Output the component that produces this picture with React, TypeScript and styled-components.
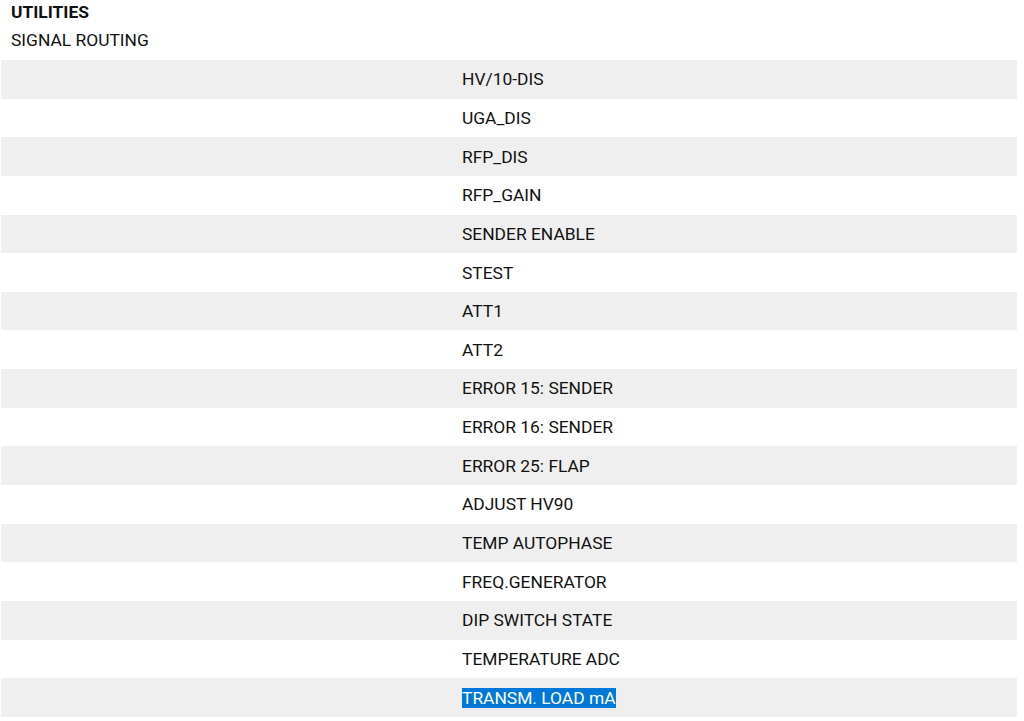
import { FC } from 'react';
import styled, { createGlobalStyle } from 'styled-components';

const signals = [
  'HV/10-DIS',
  'UGA_DIS',
  'RFP_DIS',
  'RFP_GAIN',
  'SENDER ENABLE',
  'STEST',
  'ATT1',
  'ATT2',
  'ERROR 15: SENDER',
  'ERROR 16: SENDER',
  'ERROR 25: FLAP',
  'ADJUST HV90',
  'TEMP AUTOPHASE',
  'FREQ.GENERATOR',
  'DIP SWITCH STATE',
  'TEMPERATURE ADC',
  'TRANSM. LOAD mA',
];

const selectedSignal = 'TRANSM. LOAD mA';

const App: FC = () => {
  return (
    <>
      <GlobalStyle />
      <Page>
        <Header>
          <Title>UTILITIES</Title>
          <SubTitle>SIGNAL ROUTING</SubTitle>
        </Header>
        <SignalList>
          {signals.map((signal, i) => (
            <SignalRow key={signal} striped={i % 2 === 0}>
              <EmptyCell />
              <NameCell>
                {signal === selectedSignal ? <Selected>{signal}</Selected> : signal}
              </NameCell>
            </SignalRow>
          ))}
        </SignalList>
      </Page>
    </>
  );
};

export default App;

const GlobalStyle = createGlobalStyle`
  html, body {
    margin: 0;
    padding: 0;
    background: #fff;
  }
  body {
    font-family: Roboto, "Liberation Sans", sans-serif;
    font-size: 17.4px;
    color: #111;
  }
`;

const Page = styled.div`
  width: 1024px;
  display: flex;
  flex-direction: column;
`;

const Header = styled.div`
  display: flex;
  flex-direction: column;
  padding: 2px 11px 0;
  height: 60px;
  box-sizing: border-box;
`;

const Title = styled.div`
  font-weight: 700;
  line-height: 20px;
  height: 22px;
`;

const SubTitle = styled.div`
  line-height: 32px;
`;

const SignalList = styled.div`
  display: flex;
  flex-direction: column;
  padding: 0 7px 0 1px;
`;

const SignalRow = styled.div<{ striped: boolean }>`
  display: grid;
  grid-template-columns: 461px 1fr;
  align-items: center;
  height: 38.65px;
  background: ${(p) => (p.striped ? '#efefef' : '#fff')};
`;

const EmptyCell = styled.div``;

const NameCell = styled.div`
  line-height: 20px;
`;

const Selected = styled.span`
  background: #0078d7;
  color: #fff;
`;
